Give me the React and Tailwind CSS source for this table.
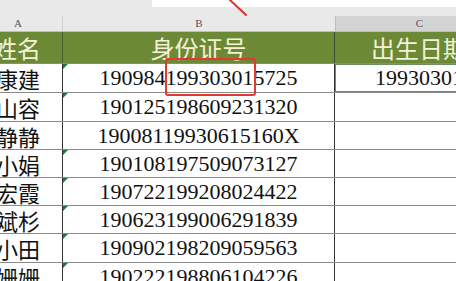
import React from 'react';

const rows = [
  { name: '康建', id: '190984199303015725', mark: true, h: 'h-[29px]' },
  { name: '山容', id: '190125198609231320', mark: true, h: 'h-[29px]' },
  { name: '静静', id: '19008119930615160X', mark: false, h: 'h-[28px]' },
  { name: '小娟', id: '190108197509073127', mark: true, h: 'h-[28px]' },
  { name: '宏霞', id: '190722199208024422', mark: true, h: 'h-[28px]' },
  { name: '斌杉', id: '190623199006291839', mark: true, h: 'h-[28px]' },
  { name: '小田', id: '190902198209059563', mark: true, h: 'h-[29px]' },
  { name: '姗姗', id: '190222198806104226', mark: true, h: 'h-[28px]' },
];

const cjk = "font-['Noto_Sans_CJK_SC',sans-serif]";
const serif = "font-['Liberation_Serif',serif]";

const Marker = () => (
  <span className="absolute left-0 top-0 h-0 w-0 border-r-[5px] border-t-[5px] border-r-transparent border-t-[#1e7a3c]" />
);

const IdText = ({ id, highlight }) => {
  if (!highlight) return <span>{id}</span>;
  return (
    <span>
      {id.slice(0, 6)}
      <span className="relative">
        {id.slice(6, 14)}
        <span className="absolute -left-[1px] -right-[2px] -top-[7px] -bottom-[6px] rounded-[3px] border-2 border-[#e23a32]" />
      </span>
      {id.slice(14)}
    </span>
  );
};

export default function App() {
  return (
    <div className="relative h-[281px] w-[456px] overflow-hidden bg-white">
      {/* top strip */}
      <div className="h-[16px] bg-[#e9e9e9]">
        <div className="ml-[152px] h-[7px] bg-white" />
      </div>

      {/* column letters */}
      <div className={`flex h-[15px] text-[11px] leading-none text-[#555] ${serif}`}>
        <div className="flex w-[63px] shrink-0 items-center border-r border-[#cfcfcf] bg-[#e9e9e9] pl-[14px]">A</div>
        <div className="flex w-[272px] shrink-0 items-center justify-center bg-[#e9e9e9]">B</div>
        <div className="flex w-[168px] shrink-0 items-center justify-center border-l border-[#bdbdbd] bg-[#d4d4d4]">C</div>
      </div>

      {/* green header */}
      <div className={`flex h-[32px] border-t border-[#bfbfbf] bg-[#6c8a36] text-[24px] leading-none text-[#f4f1d6] ${cjk}`}>
        <div className="flex w-[63px] shrink-0 items-center justify-end border-r border-[#4d5f30] pr-[21px]">
          <span className="whitespace-nowrap">姓名</span>
        </div>
        <div className="flex w-[272px] shrink-0 items-center justify-center border-r border-[#3f4a35]">
          <span className="whitespace-nowrap">身份证号</span>
        </div>
        <div className="flex w-[168px] shrink-0 items-center justify-center">
          <span className="whitespace-nowrap">出生日期</span>
        </div>
      </div>

      {/* data rows */}
      {rows.map((r, i) => (
        <div key={r.id} className={`flex ${r.h} box-border border-t border-[#8a8a8a] text-[#111]`}>
          <div className={`flex w-[63px] shrink-0 items-center justify-end border-r border-[#333] pr-[22px] text-[22px] leading-none ${cjk}`}>
            <span className="whitespace-nowrap">{r.name}</span>
          </div>
          <div className={`relative flex w-[272px] shrink-0 items-center justify-center border-r border-[#333] text-[22px] leading-none ${serif}`}>
            {r.mark && <Marker />}
            <IdText id={r.id} highlight={i === 0} />
          </div>
          <div className={`flex w-[168px] shrink-0 items-center justify-center text-[22px] leading-none ${serif} ${i === 0 ? 'border border-[#6f8f64]' : ''}`}>
            {i === 0 && <span>19930301</span>}
          </div>
        </div>
      ))}

      {/* red arrow tail */}
      <svg className="absolute left-[228px] top-0" width="24" height="20" viewBox="0 0 24 20">
        <line x1="2" y1="0" x2="18" y2="15" stroke="#e0312b" strokeWidth="2" strokeLinecap="round" />
      </svg>
    </div>
  );
}
